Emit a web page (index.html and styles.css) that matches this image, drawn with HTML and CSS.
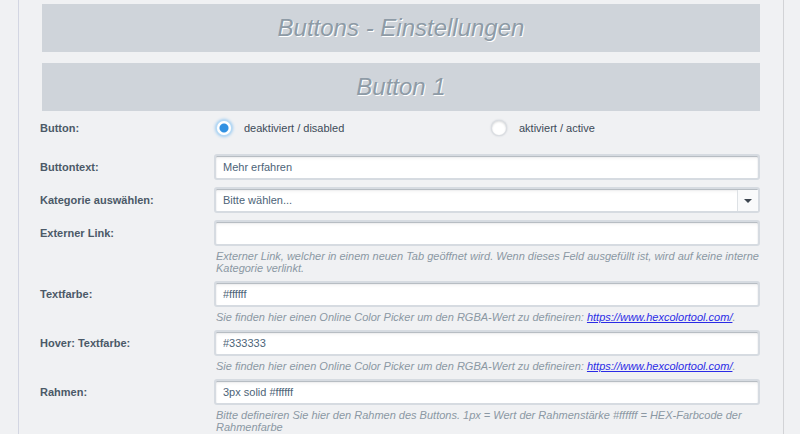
FILE: index.html
```html
<!DOCTYPE html>
<html lang="de">
<head>
    <meta charset="UTF-8">
    <meta name="viewport" content="width=device-width, initial-scale=1.0">
    <title>Buttons - Einstellungen</title>
    <link rel="stylesheet" href="styles.css">
</head>
<body>
    <div class="panel">
        <h2 class="section-title">Buttons - Einstellungen</h2>
        <h2 class="section-title">Button 1</h2>

        <form class="settings">
            <div class="row row-radio">
                <label class="row-label">Button:</label>
                <div class="radio-group">
                    <label class="radio-option">
                        <span class="radio checked"></span>
                        deaktiviert / disabled
                    </label>
                    <label class="radio-option">
                        <span class="radio"></span>
                        aktiviert / active
                    </label>
                </div>
            </div>

            <div class="row">
                <label class="row-label" for="btn_text">Buttontext:</label>
                <div class="field">
                    <input class="text-input" type="text" id="btn_text" value="Mehr erfahren">
                </div>
            </div>

            <div class="row">
                <label class="row-label" for="btn_cat">Kategorie auswählen:</label>
                <div class="field">
                    <div class="select">
                        <span class="select-value">Bitte wählen...</span>
                        <span class="select-arrow"></span>
                    </div>
                </div>
            </div>

            <div class="row">
                <label class="row-label" for="btn_link">Externer Link:</label>
                <div class="field">
                    <input class="text-input" type="text" id="btn_link" value="">
                    <p class="help">Externer Link, welcher in einem neuen Tab geöffnet wird. Wenn dieses Feld ausgefüllt ist, wird auf keine interne Kategorie verlinkt.</p>
                </div>
            </div>

            <div class="row">
                <label class="row-label" for="btn_color">Textfarbe:</label>
                <div class="field">
                    <input class="text-input" type="text" id="btn_color" value="#ffffff">
                    <p class="help">Sie finden hier einen Online Color Picker um den RGBA-Wert zu defineiren: <a href="#">https://www.hexcolortool.com/</a>.</p>
                </div>
            </div>

            <div class="row">
                <label class="row-label" for="btn_hover">Hover: Textfarbe:</label>
                <div class="field">
                    <input class="text-input" type="text" id="btn_hover" value="#333333">
                    <p class="help">Sie finden hier einen Online Color Picker um den RGBA-Wert zu defineiren: <a href="#">https://www.hexcolortool.com/</a>.</p>
                </div>
            </div>

            <div class="row">
                <label class="row-label" for="btn_border">Rahmen:</label>
                <div class="field">
                    <input class="text-input" type="text" id="btn_border" value="3px solid #ffffff">
                    <p class="help">Bitte defineiren Sie hier den Rahmen des Buttons. 1px = Wert der Rahmenstärke #ffffff = HEX-Farbcode der Rahmenfarbe</p>
                </div>
            </div>
        </form>
    </div>
</body>
</html>
```

FILE: styles.css
```css
body {
    margin: 0;
    font-family: "Liberation Sans", Arial, sans-serif;
    font-size: 11px;
    background-color: #f0f1f3;
    color: #4a5866;
}
.panel {
    margin-left: 18px;
    width: 766px;
    box-sizing: border-box;
    min-height: 434px;
    padding: 4px 23px 0 23px;
    border-left: 1px solid #d3d6e2;
    border-right: 1px solid #d2d3d6;
}
.section-title {
    height: 48px;
    line-height: 48px;
    margin: 0 0 11px 0;
    background-color: #cfd4da;
    text-align: center;
    font-size: 24px;
    font-weight: normal;
    font-style: italic;
    color: #8e9ba6;
    text-shadow: 1px 1px 0 #fff;
}
.section-title + .section-title {
    margin-bottom: 0;
}
.settings {
    margin: 0 0 0 -2px;
    padding-top: 3px;
}
.row {
    display: grid;
    grid-template-columns: 174px 1fr;
    align-items: start;
    margin-bottom: 7px;
}
.row-label {
    line-height: 26px;
    font-weight: bold;
    color: #4b5967;
}
.row-radio {
    align-items: center;
    height: 28px;
    margin-bottom: 12px;
}
.radio-group {
    display: grid;
    grid-template-columns: 275px 1fr;
    padding-left: 3px;
}
.radio-option {
    display: flex;
    align-items: center;
    gap: 13px;
    color: #3c4a58;
}
.radio {
    width: 14px;
    height: 14px;
    border-radius: 50%;
    background: #fff;
    box-shadow: 0 0 0 1px #dcdfe3, 0 0 2px 1px #c4c8ce, inset 0 1px 2px rgba(0, 0, 0, 0.12);
}
.radio.checked {
    background: radial-gradient(circle, #3191e2 0, #3191e2 4px, #fff 5px);
    box-shadow: 0 0 0 1px #b7dbf6, 0 0 3px 2px #9ccbf1;
}
.field {
    min-width: 0;
}
.text-input,
.select {
    display: block;
    width: 100%;
    height: 26px;
    box-sizing: border-box;
    margin: 0;
    padding: 0 7px;
    border: 2px solid #d6dbe1;
    border-radius: 3px;
    background: #fff;
    box-shadow: inset 0 1px 1px rgba(90, 105, 120, 0.45), inset 0 3px 3px rgba(0, 0, 0, 0.04);
    font-family: inherit;
    font-size: 11px;
    color: #4d6478;
    outline: none;
}
.select {
    display: flex;
    align-items: center;
    padding-right: 0;
}
.select-value {
    flex: 1;
}
.select-arrow {
    position: relative;
    width: 20px;
    height: 21px;
    margin-top: 1px;
    border-left: 1px solid #dde1e5;
    background: #f9fafb;
}
.select-arrow::after {
    content: "";
    position: absolute;
    left: 6px;
    top: 9px;
    border-left: 4px solid transparent;
    border-right: 4px solid transparent;
    border-top: 4px solid #3d4650;
}
.help {
    margin: 4px 0 0 2px;
    line-height: 12px;
    font-style: italic;
    color: #8b98a3;
}
.help a {
    color: #2a2ae6;
    text-decoration: underline;
}
```
